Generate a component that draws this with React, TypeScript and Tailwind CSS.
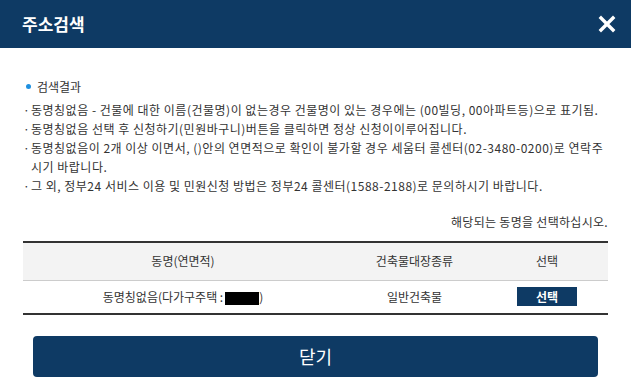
export default function App() {
    const font = { fontFamily: '"Noto Sans CJK KR", "Noto Sans", sans-serif' };

    return (
        <div className="w-[631px] h-[384px] bg-white overflow-hidden text-[#333]" style={font}>
            <div className="flex h-[48px] items-center justify-between bg-[#0e3a64] pl-[22px] pr-[14px]">
                <h2 className="text-[17px] font-bold text-white">주소검색</h2>
                <svg width="18" height="18" viewBox="0 0 18 18" className="me-[1px]">
                    <path d="M3 3 L15 15 M15 3 L3 15" stroke="white" strokeWidth="3.4" strokeLinecap="square" />
                </svg>
            </div>

            <div className="px-[23px] pt-[29px]">
                <div className="flex items-center ps-[3px] text-[12px] leading-[19px]">
                    <span className="me-[6px] h-[5px] w-[5px] rounded-full bg-[#1e90e0]"></span>
                    <span>검색결과</span>
                </div>

                <ul className="mt-[4px] text-[12px] leading-[19px] tracking-[0.5px]">
                    <li className="flex">
                        <span className="w-[8px] shrink-0">·</span>
                        <span className="whitespace-nowrap">동명칭없음 - 건물에 대한 이름(건물명)이 없는경우 건물명이 있는 경우에는 (00빌딩, 00아파트등)으로 표기됨.</span>
                    </li>
                    <li className="flex">
                        <span className="w-[8px] shrink-0">·</span>
                        <span className="whitespace-nowrap">동명칭없음 선택 후 신청하기(민원바구니)버튼을 클릭하면 정상 신청이이루어집니다.</span>
                    </li>
                    <li className="flex">
                        <span className="w-[8px] shrink-0">·</span>
                        <span className="whitespace-nowrap">동명칭없음이 2개 이상 이면서, ()안의 연면적으로 확인이 불가할 경우 세움터 콜센터(02-3480-0200)로 연락주<br />시기 바랍니다.</span>
                    </li>
                    <li className="flex">
                        <span className="w-[8px] shrink-0">·</span>
                        <span className="whitespace-nowrap">그 외, 정부24 서비스 이용 및 민원신청 방법은 정부24 콜센터(1588-2188)로 문의하시기 바랍니다.</span>
                    </li>
                </ul>

                <p className="mt-[17px] text-right text-[12px] leading-[19px] tracking-[0.3px]">해당되는 동명을 선택하십시오.</p>

                <table className="mt-[10px] w-full border-t-2 border-b-2 border-[#333] text-[12px]">
                    <thead>
                        <tr className="h-[38px] border-b border-[#ccc] bg-[#f3f3f3]">
                            <th className="w-[320px] font-normal">동명(연면적)</th>
                            <th className="font-normal">건축물대장종류</th>
                            <th className="w-[122px] font-normal">선택</th>
                        </tr>
                    </thead>
                    <tbody>
                        <tr className="h-[34px]">
                            <td className="text-center">
                                동명칭없음(다가구주택 :<span className="ms-[2px] inline-block h-[13px] w-[34px] bg-black align-middle"></span>)
                            </td>
                            <td className="text-center">일반건축물</td>
                            <td className="text-center">
                                <button className="h-[19px] w-[60px] bg-[#0e3a64] text-[12px] font-semibold text-white">선택</button>
                            </td>
                        </tr>
                    </tbody>
                </table>
            </div>

            <div className="px-[33px] pt-[21px]">
                <button className="h-[41px] w-full rounded-[4px] bg-[#0e3a64] text-[18px] text-white">닫기</button>
            </div>
        </div>
    );
}
